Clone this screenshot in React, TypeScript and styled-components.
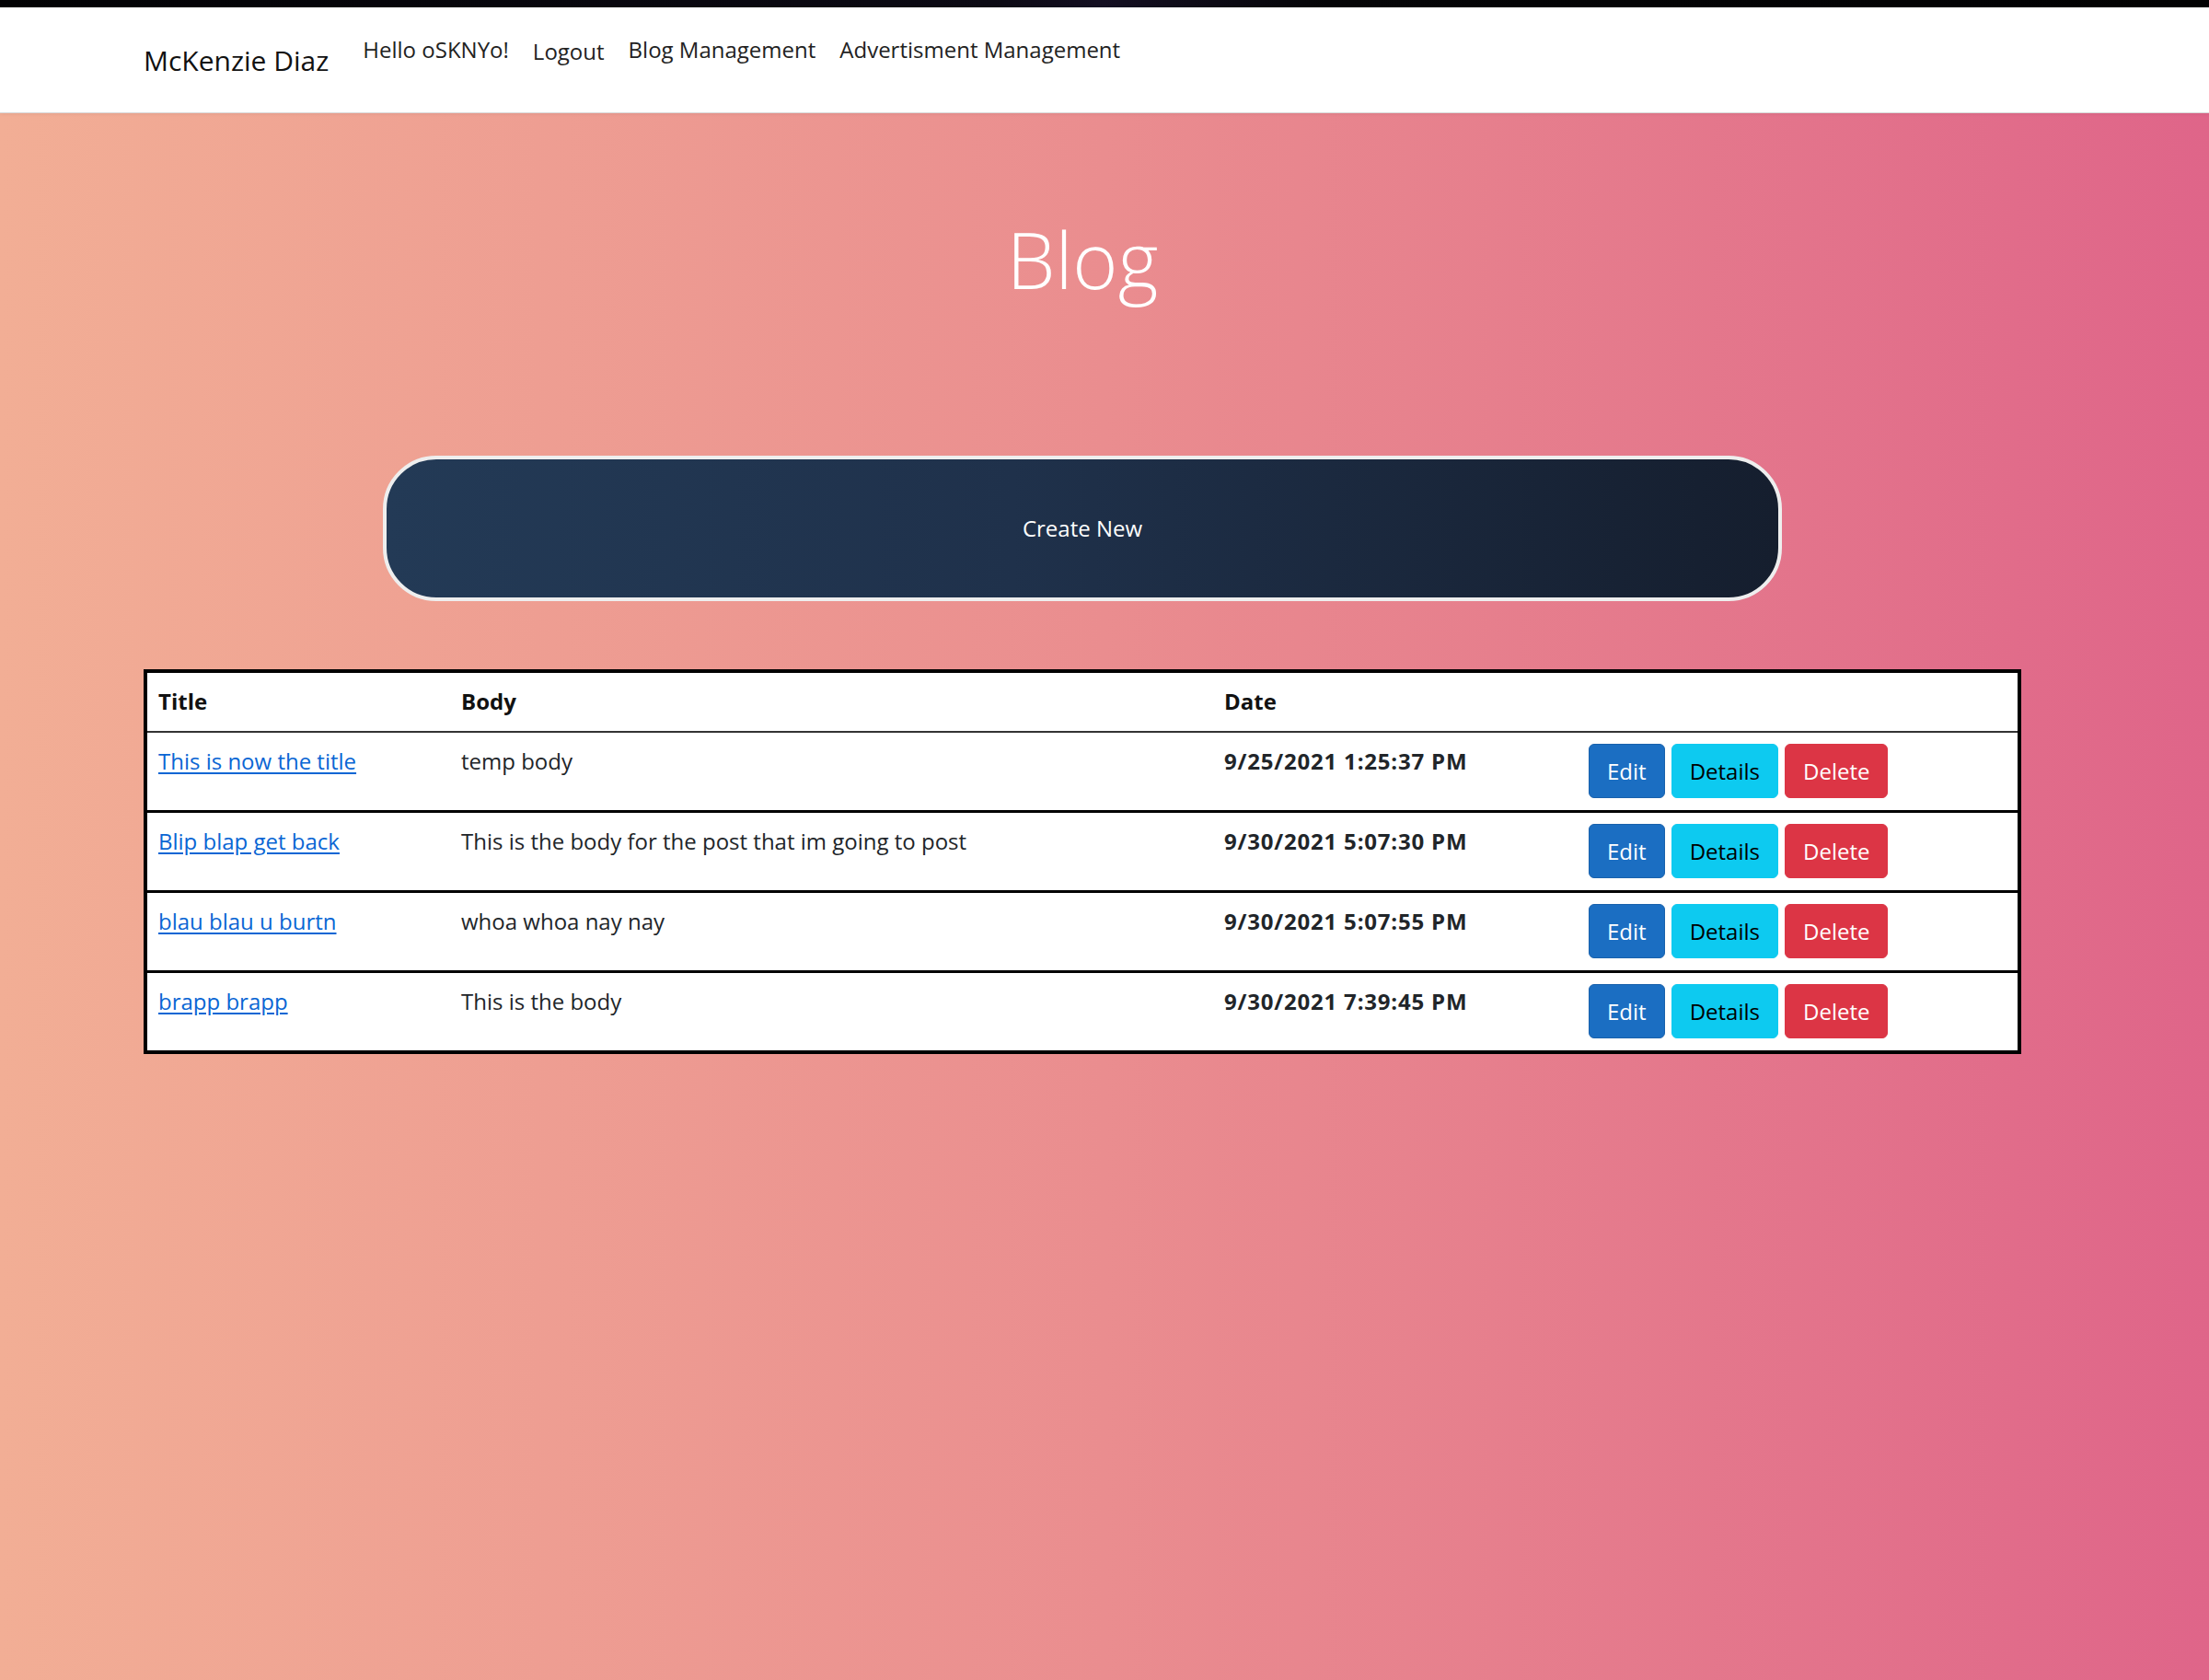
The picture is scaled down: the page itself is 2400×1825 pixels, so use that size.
import React from "react";
import styled, { createGlobalStyle } from "styled-components";

const GlobalStyle = createGlobalStyle`
  html, body {
    margin: 0;
    padding: 0;
  }
  body {
    font-family: "Open Sans", "Noto Sans", "Liberation Sans", sans-serif;
    color: #212529;
    min-height: 1825px;
    background: linear-gradient(to right, #f2ae95 0%, #ea8d8f 50%, #df6589 100%);
  }
`;

const TopStrip = styled.div`
  height: 8px;
  background: linear-gradient(to right, #020204, #0c0a14 45%, #140f22 50%, #050507 60%, #020203);
`;

const NavBar = styled.header`
  height: 114px;
  background: #ffffff;
  border-bottom: 1px solid #d9d9d9;
  box-shadow: 0 1px 4px rgba(0, 0, 0, 0.06);
  display: flex;
  align-items: flex-start;
  padding-left: 156px;
  box-sizing: content-box;
`;

const Brand = styled.a`
  font-size: 30px;
  line-height: 45px;
  margin-top: 35px;
  color: #111;
  text-decoration: none;
  margin-right: 37px;
`;

const NavLinks = styled.nav`
  display: flex;
  gap: 26px;
  margin-top: 28px;
`;

const NavLink = styled.a<{ $offset?: number }>`
  font-size: 24px;
  line-height: 36px;
  color: #222;
  text-decoration: none;
  margin-top: ${(p) => p.$offset ?? 0}px;
`;

const Main = styled.main`
  width: 2040px;
  margin-left: 156px;
  display: flex;
  flex-direction: column;
  align-items: center;
`;

const Title = styled.h1`
  font-size: 84px;
  font-weight: 300;
  line-height: 106px;
  color: #ffffff;
  margin: 106px 0 0;
`;

const CreateButton = styled.a`
  margin-top: 160px;
  width: 1520px;
  height: 158px;
  box-sizing: border-box;
  border: 4px solid #eeeeee;
  border-radius: 58px;
  background: linear-gradient(to right, #233a56 0%, #1f314b 45%, #151e2e 100%);
  color: #ffffff;
  font-size: 24px;
  display: flex;
  align-items: center;
  justify-content: center;
  text-decoration: none;
  padding-bottom: 2px;
`;

const Table = styled.table`
  margin-top: 74px;
  width: 2040px;
  border-collapse: collapse;
  table-layout: fixed;
  background: #ffffff;
  border: 4px solid #000000;
  font-size: 24px;
`;

const HeadCell = styled.th<{ $w: number }>`
  width: ${(p) => p.$w}px;
  text-align: left;
  font-weight: 700;
  padding: 13px 12px 14px;
  line-height: 36px;
  color: #111;
  border-bottom: 2px solid #333;
`;

const Row = styled.tr<{ $last?: boolean }>`
  border-bottom: ${(p) => (p.$last ? "none" : "3px solid #000")};
`;

const Cell = styled.td<{ $bold?: boolean }>`
  vertical-align: top;
  padding: 13px 12px 13px;
  line-height: 36px;
  font-weight: ${(p) => (p.$bold ? 700 : 400)};
  letter-spacing: ${(p) => (p.$bold ? "0.8px" : "0")};
  color: #212529;
`;

const TitleLink = styled.a`
  color: #0a66d4;
  text-decoration: underline;
  text-underline-offset: 3px;
`;

const Actions = styled.div`
  display: flex;
  gap: 7px;
  margin-top: -1px;
`;

const ActionButton = styled.a<{ $variant: "edit" | "details" | "delete" }>`
  display: inline-block;
  font-size: 24px;
  line-height: 36px;
  padding: 10.5px 19px;
  border-radius: 6px;
  border: 1px solid
    ${(p) =>
      p.$variant === "edit" ? "#1861ac" : p.$variant === "details" ? "#0dcaf0" : "#dc3545"};
  background: ${(p) =>
    p.$variant === "edit" ? "#1b6ec2" : p.$variant === "details" ? "#0dcaf0" : "#dc3545"};
  color: ${(p) => (p.$variant === "details" ? "#000" : "#fff")};
  text-decoration: none;
`;

const posts = [
  { title: "This is now the title", body: "temp body", date: "9/25/2021 1:25:37 PM" },
  {
    title: "Blip blap get back",
    body: "This is the body for the post that im going to post",
    date: "9/30/2021 5:07:30 PM",
  },
  { title: "blau blau u burtn", body: "whoa whoa nay nay", date: "9/30/2021 5:07:55 PM" },
  { title: "brapp brapp", body: "This is the body", date: "9/30/2021 7:39:45 PM" },
];

export default function App() {
  return (
    <>
      <GlobalStyle />
      <TopStrip />
      <NavBar>
        <Brand href="#">McKenzie Diaz</Brand>
        <NavLinks>
          <NavLink href="#">Hello oSKNYo!</NavLink>
          <NavLink href="#" $offset={2}>Logout</NavLink>
          <NavLink href="#">Blog Management</NavLink>
          <NavLink href="#">Advertisment Management</NavLink>
        </NavLinks>
      </NavBar>
      <Main>
        <Title>Blog</Title>
        <CreateButton href="#">Create New</CreateButton>
        <Table>
          <thead>
            <tr>
              <HeadCell $w={305}>Title</HeadCell>
              <HeadCell $w={805}>Body</HeadCell>
              <HeadCell $w={372}>Date</HeadCell>
              <HeadCell $w={454}></HeadCell>
            </tr>
          </thead>
          <tbody>
            {posts.map((p, i) => (
              <Row key={p.title} $last={i === posts.length - 1}>
                <Cell>
                  <TitleLink href="#">{p.title}</TitleLink>
                </Cell>
                <Cell>{p.body}</Cell>
                <Cell $bold>{p.date}</Cell>
                <Cell>
                  <Actions>
                    <ActionButton $variant="edit" href="#">Edit</ActionButton>
                    <ActionButton $variant="details" href="#">Details</ActionButton>
                    <ActionButton $variant="delete" href="#">Delete</ActionButton>
                  </Actions>
                </Cell>
              </Row>
            ))}
          </tbody>
        </Table>
      </Main>
    </>
  );
}
